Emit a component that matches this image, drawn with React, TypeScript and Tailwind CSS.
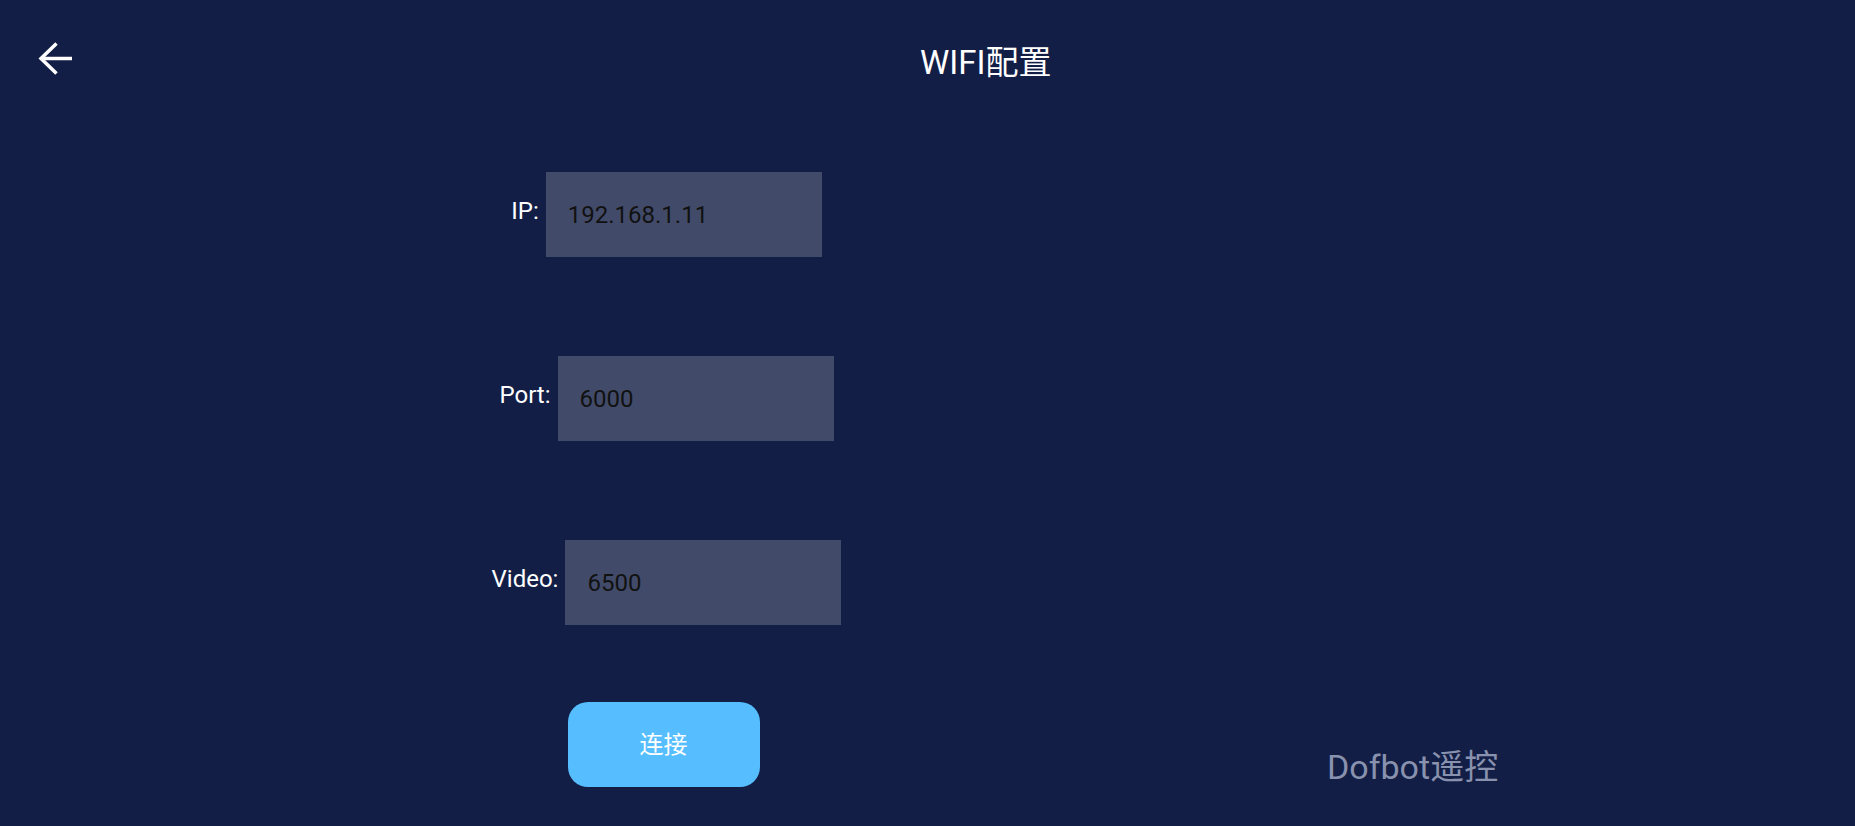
export default function App() {
  const rows = [
    { label: "IP:", value: "192.168.1.11" },
    { label: "Port:", value: "6000" },
    { label: "Video:", value: "6500" },
  ];

  return (
    <div className="h-[826px] w-full overflow-hidden bg-[#121e46] font-['Roboto','Noto_Sans_CJK_SC',sans-serif] text-white">
      <div className="flex items-start pl-[38px] pt-[42px]">
        <button className="h-[34px] w-[34px]">
          <svg viewBox="0 0 34 34" className="h-[34px] w-[34px]" fill="none" stroke="white" strokeWidth="3.5">
            <path d="M34 16.5H3" />
            <path d="M18.5 1.5L3 16.5L18.5 31.5" />
          </svg>
        </button>
        <h1 className="ml-[848px] mt-[1px] text-[33px] leading-[40px]">WIFI配置</h1>
      </div>

      <div className="mt-[89px] flex w-[1333px] flex-col items-center gap-[99px]">
        {rows.map((r) => (
          <div key={r.label} className="flex items-center">
            <span className="mb-[8px] mr-[7px] text-[24px] leading-[30px]">{r.label}</span>
            <div className="flex h-[85px] w-[276px] items-center bg-[#414b69] pl-[22px] text-[24px] text-[#111111]">
              {r.value}
            </div>
          </div>
        ))}
      </div>

      <div className="mt-[77px] flex items-end">
        <div className="flex w-[1327px] justify-center">
          <button className="h-[85px] w-[192px] rounded-[20px] bg-[#56beff] text-[24px] text-white">连接</button>
        </div>
        <span className="text-[34px] leading-[40px] text-[#8891ad]">Dofbot遥控</span>
      </div>
    </div>
  );
}
